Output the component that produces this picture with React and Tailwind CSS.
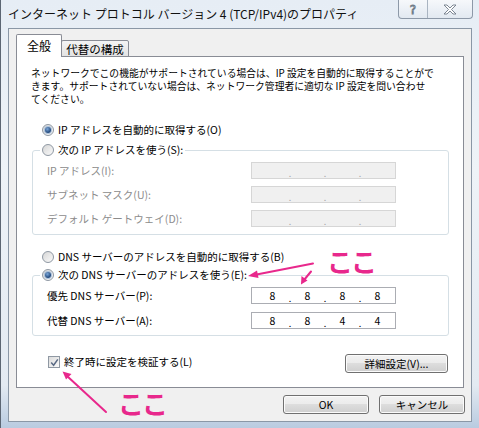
import React from "react";

function Radio({ checked }) {
  return (
    <span className="w-[12px] h-[12px] rounded-full border border-[#8f98a3] bg-[linear-gradient(135deg,#d6d6d6,#fafafa)] flex items-center justify-center shrink-0">
      {checked && (
        <span className="w-[6px] h-[6px] rounded-full bg-[radial-gradient(circle_at_40%_35%,#7aa6d8,#1d4478_70%)] shadow-[0_0_0_1px_#a9c0da]" />
      )}
    </span>
  );
}

function IpBox({ values, disabled }) {
  const cls = disabled
    ? "bg-[#f0f0f0] border-[#d6d6d6] text-[#a8a8a8]"
    : "bg-white border-[#abadb3] text-black";
  const parts = [];
  values.forEach((v, i) => {
    parts.push(
      <span key={"v" + i} className="w-[33px] text-center">
        {v}
      </span>
    );
    if (i < 3)
      parts.push(
        <span key={"d" + i} className="w-[2px] flex justify-center text-[9px] leading-[9px] mt-[5px]">
          .
        </span>
      );
  });
  return (
    <div className={"w-[145px] h-[17px] border flex items-center pl-[4px] text-[10.5px] leading-[15px] " + cls}>
      {parts}
    </div>
  );
}

function Row({ label, values, disabled }) {
  return (
    <div className="h-[17px] flex items-center">
      <span className={"w-[204px] " + (disabled ? "text-[#8c8c8c]" : "text-black")}>{label}</span>
      <IpBox values={values} disabled={disabled} />
    </div>
  );
}

function Btn({ children, w }) {
  return (
    <div
      className={
        "h-[19px] border border-[#707070] rounded-[3px] bg-[linear-gradient(#f2f2f2,#ebebeb_50%,#dddddd_50%,#cfcfcf)] shadow-[inset_0_0_0_1px_#fbfbfb] flex items-center justify-center text-[10.5px] leading-[14px] text-black " +
        w
      }
    >
      {children}
    </div>
  );
}

export default function App() {
  return (
    <div className="w-[479px] h-[428px] relative overflow-hidden flex flex-col bg-[linear-gradient(180deg,#e6edf5,#eef3f8_40%,#e3eaf2_90%,#b9cbe0)] border-l border-[#5c6673] font-['Noto_Sans_CJK_JP','Noto_Sans',sans-serif] text-black">
      {/* title bar */}
      <div className="h-[28px] flex shrink-0">
        <div className="pl-[7px] pt-[7px] text-[12px] leading-[14px] text-[#111]">
          インターネット プロトコル バージョン 4 (TCP/IPv4)のプロパティ
        </div>
        <div className="ml-auto mr-[6px] h-[19px] flex border border-t-0 border-[#8d99a8] rounded-b-[4px] overflow-hidden bg-[linear-gradient(#f6f8fb,#e2e9f1)]">
          <div className="w-[29px] border-r border-[#a9b4c1] flex items-center justify-center">
            <svg width="10" height="12" viewBox="0 0 10 12">
              <text x="5" y="10.5" textAnchor="middle" fontSize="12" fontFamily="DejaVu Sans, sans-serif" fill="#ffffff" stroke="#6f7b88" strokeWidth="0.9">?</text>
            </svg>
          </div>
          <div className="w-[44px] flex items-center justify-center">
            <svg width="14" height="11" viewBox="0 0 14 11">
              <polygon
                points="1,1 4,1 7,4 10,1 13,1 8.5,5.5 13,10 10,10 7,7 4,10 1,10 5.5,5.5"
                fill="#ffffff"
                stroke="#6f7b88"
                strokeWidth="0.9"
                strokeLinejoin="round"
              />
            </svg>
          </div>
        </div>
      </div>

      {/* body */}
      <div className="mx-[7px] h-[394px] border border-[#8a97a6] bg-[#f0f0f0] flex flex-col shrink-0">
        {/* tabs */}
        <div className="mt-[5px] ml-[7px] h-[23px] flex items-end relative z-10 -mb-[1px]">
          <div className="w-[46px] h-[23px] border border-b-0 border-[#898c95] bg-white rounded-t-[2px] flex items-center justify-center text-[12px] leading-[14px]">
            全般
          </div>
          <div className="w-[68px] h-[17px] -ml-px border border-[#898c95] bg-[linear-gradient(#f4f4f4,#e3e3e3)] rounded-t-[2px] flex items-center justify-center text-[11.5px] leading-[14px]">
            代替の構成
          </div>
        </div>

        {/* panel */}
        <div className="ml-[7px] w-[448px] h-[332px] border border-[#898c95] bg-white flex flex-col text-[10.5px] leading-[14px]">
          <div className="mt-[10px] ml-[14px] text-[9.8px] leading-[13px]">
            <div>ネットワークでこの機能がサポートされている場合は、IP 設定を自動的に取得することがで</div>
            <div>きます。サポートされていない場合は、ネットワーク管理者に適切な IP 設定を問い合わせ</div>
            <div>てください。</div>
          </div>

          <div className="mt-[17px] ml-[25px] h-[14px] flex items-center gap-[4px]">
            <Radio checked />
            <span>IP アドレスを自動的に取得する(O)</span>
          </div>

          <fieldset className="mt-[6px] ml-[15px] w-[417px] border border-[#d5dfe5] rounded-[3px]">
            <legend className="ml-[7px] px-[2px] h-[14px] flex items-center gap-[4px]">
              <Radio />
              <span>次の IP アドレスを使う(S):</span>
            </legend>
            <div className="pt-[5px] pl-[14px] pb-[7px] flex flex-col gap-[7px]">
              <Row label="IP アドレス(I):" values={["", "", "", ""]} disabled />
              <Row label="サブネット マスク(U):" values={["", "", "", ""]} disabled />
              <Row label="デフォルト ゲートウェイ(D):" values={["", "", "", ""]} disabled />
            </div>
          </fieldset>

          <div className="mt-[15px] ml-[25px] h-[14px] flex items-center gap-[4px]">
            <Radio />
            <span>DNS サーバーのアドレスを自動的に取得する(B)</span>
          </div>

          <fieldset className="mt-[4px] ml-[15px] w-[417px] border border-[#d5dfe5] rounded-[3px]">
            <legend className="ml-[7px] px-[2px] h-[14px] flex items-center gap-[4px]">
              <Radio checked />
              <span>次の DNS サーバーのアドレスを使う(E):</span>
            </legend>
            <div className="pt-[5px] pl-[14px] pb-[6px] flex flex-col gap-[8px]">
              <Row label="優先 DNS サーバー(P):" values={["8", "8", "8", "8"]} />
              <Row label="代替 DNS サーバー(A):" values={["8", "8", "4", "4"]} />
            </div>
          </fieldset>

          <div className="mt-[18px] ml-[31px] mr-[15px] flex items-start justify-between">
            <div className="mt-[1px] flex items-center gap-[4px]">
              <span className="w-[12px] h-[12px] border border-[#8f98a3] bg-[linear-gradient(135deg,#dcdcdc,#fafafa)] flex items-center justify-center">
                <svg width="9" height="9" viewBox="0 0 9 9">
                  <path d="M1.2 4.6 L3.6 7.2 L7.8 1.4" fill="none" stroke="#5a6a84" strokeWidth="1.5" />
                </svg>
              </span>
              <span>終了時に設定を検証する(L)</span>
            </div>
            <Btn w="w-[103px]">詳細設定(V)...</Btn>
          </div>
        </div>

        {/* buttons */}
        <div className="mt-[7px] pr-[6px] flex justify-end gap-[10px]">
          <Btn w="w-[86px]">OK</Btn>
          <Btn w="w-[86px]">キャンセル</Btn>
        </div>
      </div>

      {/* annotations */}
      <div className="absolute left-[326px] top-[246px] text-[26px] leading-[30px] font-bold text-[#e8288c] tracking-[-2px]">
        ここ
      </div>
      <div className="absolute left-[117px] top-[388px] text-[26px] leading-[30px] font-bold text-[#e8288c] tracking-[-2px]">
        ここ
      </div>
      <svg className="absolute inset-0 pointer-events-none" width="479" height="428" viewBox="0 0 479 428">
        <g stroke="#e8288c" strokeWidth="2" fill="#e8288c" strokeLinecap="round">
          <line x1="312" y1="263.5" x2="253" y2="275" />
          <polygon points="247,276 256,270.5 257.5,278" stroke="none" />
          <line x1="310" y1="271.5" x2="303" y2="280" />
          <polygon points="300,284.5 300.5,276 306.5,280.5" stroke="none" />
          <line x1="105" y1="412" x2="66" y2="376" />
          <polygon points="61.5,371.5 70.5,374 65,379.5" stroke="none" />
        </g>
      </svg>
    </div>
  );
}
